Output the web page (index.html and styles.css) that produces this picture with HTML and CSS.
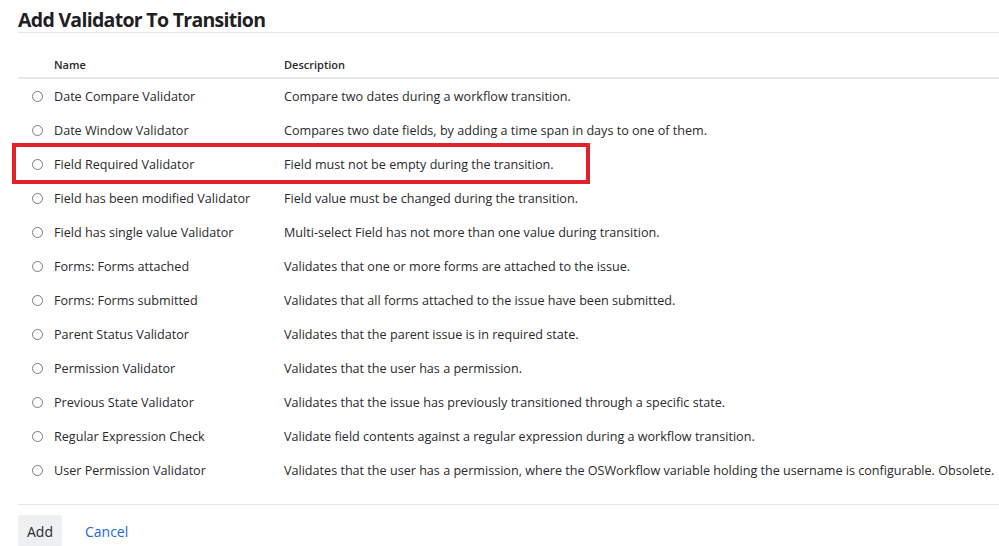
FILE: index.html
```html
<!DOCTYPE html>
<html lang="en">
<head>
    <meta charset="UTF-8">
    <title>Add Validator To Transition</title>
    <link rel="stylesheet" href="styles.css">
</head>
<body>
    <div class="page">
        <h2 class="title">Add Validator To Transition</h2>

        <div class="table-wrap">
            <table class="validators">
                <thead>
                    <tr>
                        <th class="col-radio"></th>
                        <th class="col-name">Name</th>
                        <th>Description</th>
                    </tr>
                </thead>
                <tbody>
                    <tr><td class="col-radio"><span class="radio"></span></td><td>Date Compare Validator</td><td>Compare two dates during a workflow transition.</td></tr>
                    <tr><td class="col-radio"><span class="radio"></span></td><td>Date Window Validator</td><td>Compares two date fields, by adding a time span in days to one of them.</td></tr>
                    <tr><td class="col-radio"><span class="radio"></span></td><td>Field Required Validator</td><td>Field must not be empty during the transition.</td></tr>
                    <tr><td class="col-radio"><span class="radio"></span></td><td>Field has been modified Validator</td><td>Field value must be changed during the transition.</td></tr>
                    <tr><td class="col-radio"><span class="radio"></span></td><td>Field has single value Validator</td><td>Multi-select Field has not more than one value during transition.</td></tr>
                    <tr><td class="col-radio"><span class="radio"></span></td><td>Forms: Forms attached</td><td>Validates that one or more forms are attached to the issue.</td></tr>
                    <tr><td class="col-radio"><span class="radio"></span></td><td>Forms: Forms submitted</td><td>Validates that all forms attached to the issue have been submitted.</td></tr>
                    <tr><td class="col-radio"><span class="radio"></span></td><td>Parent Status Validator</td><td>Validates that the parent issue is in required state.</td></tr>
                    <tr><td class="col-radio"><span class="radio"></span></td><td>Permission Validator</td><td>Validates that the user has a permission.</td></tr>
                    <tr><td class="col-radio"><span class="radio"></span></td><td>Previous State Validator</td><td>Validates that the issue has previously transitioned through a specific state.</td></tr>
                    <tr><td class="col-radio"><span class="radio"></span></td><td>Regular Expression Check</td><td>Validate field contents against a regular expression during a workflow transition.</td></tr>
                    <tr><td class="col-radio"><span class="radio"></span></td><td>User Permission Validator</td><td>Validates that the user has a permission, where the OSWorkflow variable holding the username is configurable. Obsolete.</td></tr>
                </tbody>
            </table>
            <div class="highlight"></div>
        </div>

        <div class="buttons">
            <button class="btn-add">Add</button>
            <a class="btn-cancel" href="#">Cancel</a>
        </div>
    </div>
</body>
</html>
```

FILE: styles.css
```css
body {
    margin: 0;
    font-family: "Open Sans", "Liberation Sans", Arial, sans-serif;
    color: #292a2e;
    background: #fff;
    overflow: hidden;
}
.page {
    padding: 9px 0 0 18px;
}
.title {
    margin: 0;
    padding-bottom: 1px;
    font-size: 19.5px;
    font-weight: 700;
    letter-spacing: -0.7px;
    line-height: 22px;
    color: #1f2024;
    border-bottom: 1px solid #e4e5e8;
}
.table-wrap {
    position: relative;
    margin-top: 19px;
}
.validators {
    width: 100%;
    table-layout: fixed;
    border-collapse: collapse;
    font-size: 12.6px;
}
.validators th {
    text-align: left;
    font-size: 11px;
    font-weight: 600;
    height: 25px;
    padding: 0;
    vertical-align: middle;
    border-bottom: 2px solid #e6e7ea;
}
.validators td {
    height: 34px;
    padding: 0;
    white-space: nowrap;
    vertical-align: middle;
}
.col-radio {
    width: 36px;
}
.col-name {
    width: 230px;
}
.radio {
    display: block;
    width: 9px;
    height: 9px;
    margin-left: 14px;
    border: 1px solid #7a7c82;
    border-radius: 50%;
}
.highlight {
    position: absolute;
    left: -6px;
    top: 91px;
    width: 570px;
    height: 33px;
    border: 4px solid #e4202a;
}
.buttons {
    display: flex;
    align-items: center;
    margin-top: 17px;
    padding-top: 10px;
    border-top: 1px solid #e4e5e8;
}
.btn-add {
    font-family: inherit;
    font-size: 14px;
    color: #292a2e;
    background: #eeeff1;
    border: none;
    border-radius: 3px;
    padding: 6px 9px;
    height: 32px;
}
.btn-cancel {
    margin-left: 23px;
    font-size: 14px;
    color: #1d68d9;
    text-decoration: none;
}
```
